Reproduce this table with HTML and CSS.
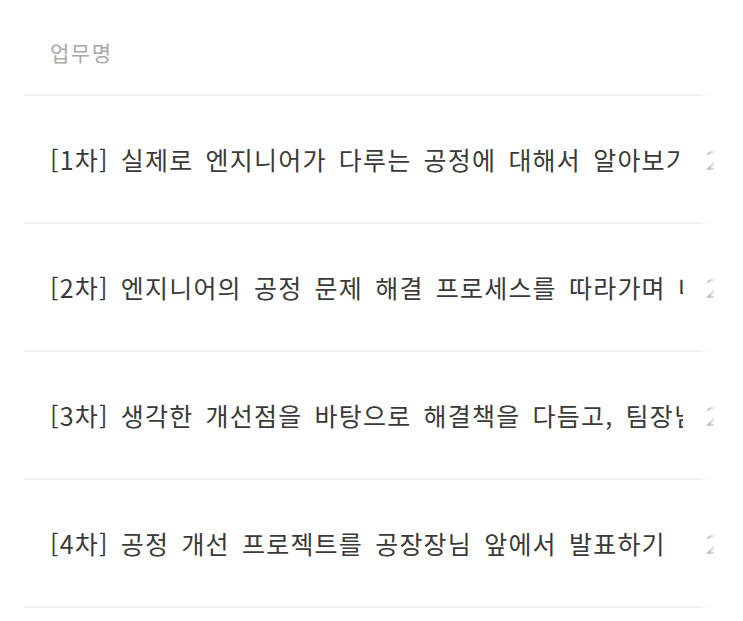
FILE: index.html
```html
<!DOCTYPE html>
<html lang="ko">
<head>
<meta charset="utf-8">
<link rel="stylesheet" href="styles.css">
</head>
<body>
<div class="table">
  <div class="row head">
    <div class="cell name">업무명</div>
    <div class="cell date">기간</div>
  </div>
  <div class="row">
    <div class="cell name">[1차] 실제로 엔지니어가 다루는 공정에 대해서 알아보기</div>
    <div class="cell date">2023.01.02</div>
  </div>
  <div class="row">
    <div class="cell name">[2차] 엔지니어의 공정 문제 해결 프로세스를 따라가며 내가 직접 해결해보기</div>
    <div class="cell date">2023.01.09</div>
  </div>
  <div class="row">
    <div class="cell name">[3차] 생각한 개선점을 바탕으로 해결책을 다듬고, 팀장님께 보고하기</div>
    <div class="cell date">2023.01.16</div>
  </div>
  <div class="row">
    <div class="cell name">[4차] 공정 개선 프로젝트를 공장장님 앞에서 발표하기</div>
    <div class="cell date">2023.01.23</div>
  </div>
  <div class="fade"></div>
</div>
</body>
</html>
```

FILE: styles.css
```css
html, body {
  margin: 0;
  padding: 0;
  background: #ffffff;
}
body {
  font-family: "Noto Sans CJK KR", "Noto Sans", sans-serif;
}
.table {
  position: relative;
  margin-left: 24px;
  width: 690px;
  overflow: hidden;
}
.row {
  display: flex;
  align-items: center;
  height: 126px;
  border-bottom: 2px solid #f0f0f0;
}
.row.head {
  height: 94px;
  align-items: flex-start;
}
.cell {
  white-space: nowrap;
  overflow: hidden;
  flex: none;
}
.name {
  width: 633px;
  padding-left: 26px;
  margin-right: 23px;
  font-size: 25px;
  letter-spacing: 1.2px;
  word-spacing: 4px;
  color: #3a3a3a;
}
.date {
  font-size: 25px;
  letter-spacing: 1px;
  color: #3a3a3a;
}
.head .cell {
  font-size: 21px;
  letter-spacing: 1.5px;
  color: #a8a8a8;
  padding-top: 38px;
  line-height: 28px;
}
.head .date {
  visibility: hidden;
}
.fade {
  position: absolute;
  top: 0;
  right: 0;
  width: 14px;
  height: 100%;
  background: linear-gradient(to right, rgba(255,255,255,0.3), rgba(255,255,255,0.9));
}
```
